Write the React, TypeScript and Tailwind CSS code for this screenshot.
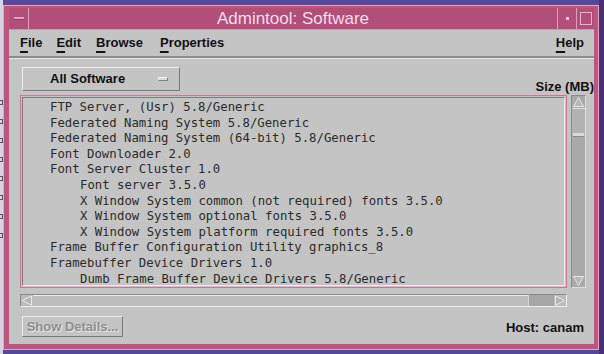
import React from 'react';

const rows: { text: string; level: 1 | 2 }[] = [
  { text: 'FTP Server, (Usr) 5.8/Generic', level: 1 },
  { text: 'Federated Naming System 5.8/Generic', level: 1 },
  { text: 'Federated Naming System (64-bit) 5.8/Generic', level: 1 },
  { text: 'Font Downloader 2.0', level: 1 },
  { text: 'Font Server Cluster 1.0', level: 1 },
  { text: 'Font server 3.5.0', level: 2 },
  { text: 'X Window System common (not required) fonts 3.5.0', level: 2 },
  { text: 'X Window System optional fonts 3.5.0', level: 2 },
  { text: 'X Window System platform required fonts 3.5.0', level: 2 },
  { text: 'Frame Buffer Configuration Utility graphics_8', level: 1 },
  { text: 'Framebuffer Device Drivers 1.0', level: 1 },
  { text: 'Dumb Frame Buffer Device Drivers 5.8/Generic', level: 2 },
];

const MenuItem: React.FC<{ label: string; className?: string }> = ({ label, className }) => (
  <span className={className}>
    <span className="underline decoration-[2px] underline-offset-[4px]">{label[0]}</span>
    {label.slice(1)}
  </span>
);

export default function App() {
  return (
    <div className="w-[604px] h-[354px] bg-[#54489a] flex overflow-hidden font-['Liberation_Sans',Arial,sans-serif]">
      {/* strip of the window behind */}
      <div className="w-[3px] h-full bg-[#d6d4e2] flex flex-col pt-[100px] gap-[14px]">
        {[0, 1, 2, 3, 4, 5, 6, 7].map((i) => (
          <div key={i} className="w-[3px] h-[5px] border-r border-y border-[#555]" />
        ))}
      </div>

      {/* window frame */}
      <div className="mt-[5px] w-[596px] h-[345px] bg-[#b9577f] border border-[#e3a6c2] pt-[2px] pl-[5px] pr-[4px] pb-[5px] flex flex-col">
        {/* title bar */}
        <div className="h-[22px] flex items-stretch bg-[#b24e7a] border-b border-[#d98fb0]">
          <div className="w-[20px] border-r border-[#e09cbc] flex items-center justify-center">
            <div className="w-[10px] h-[3px] bg-[#e8a0c0] border-b border-[#8e3a60]" />
          </div>
          <div className="flex-1 flex items-center justify-center text-[17px] text-[#f4dce8] leading-none">
            Admintool: Software
          </div>
          <div className="w-[19px] border-l border-[#e09cbc] flex items-center justify-center">
            <div className="w-[3px] h-[3px] bg-[#f0c0d6]" />
          </div>
          <div className="w-[18px] border-l border-[#e09cbc] flex items-center justify-center">
            <div className="w-[12px] h-[13px] border border-[#eab0ca]" />
          </div>
        </div>

        {/* client area */}
        <div className="flex-1 bg-[#c4c4c4] flex flex-col">
          {/* menu bar */}
          <div className="h-[28px] shrink-0 flex items-center pl-[11px] pr-[10px] text-[13px] font-bold text-[#111] border-b-2 border-b-[#8c8c8c] shadow-[0_1px_0_#e6e6e6]">
            <MenuItem label="File" />
            <MenuItem label="Edit" className="ml-[14px]" />
            <MenuItem label="Browse" className="ml-[15px]" />
            <MenuItem label="Properties" className="ml-[17px]" />
            <MenuItem label="Help" className="ml-auto" />
          </div>

          <div className="pl-[11px] flex flex-col">
            {/* selector row */}
            <div className="flex items-end pt-[9px] h-[37px]">
              <div className="ml-[2px] self-start w-[158px] h-[24px] flex items-center border border-t-[#eeeeee] border-l-[#eeeeee] border-r-[#7a7a7a] border-b-[#7a7a7a] text-[13px] font-bold text-[#111]">
                <span className="pl-[27px]">All Software</span>
                <span className="ml-auto mr-[11px] w-[10px] h-[4px] bg-[#d8d8d8] border border-t-[#f2f2f2] border-l-[#f2f2f2] border-r-[#808080] border-b-[#808080]" />
              </div>
              <div className="ml-auto pb-[2px] text-[13px] font-bold text-[#111] leading-none">Size (MB)</div>
            </div>

            {/* list with vertical scrollbar */}
            <div className="flex gap-[4px]">
              <div className="w-[547px] h-[193px] border border-[#c07a9a] p-[1px]">
                <div className="h-full border border-t-[#7c7c7c] border-l-[#7c7c7c] border-r-[#ececec] border-b-[#ececec] pt-[2px] overflow-hidden font-['DejaVu_Sans_Mono',monospace] text-[12.3px] leading-[15.6px] text-[#2b2b2b]">
                  {rows.map((r, i) => (
                    <div key={i} className={r.level === 1 ? 'pl-[27px]' : 'pl-[57px]'}>
                      {r.text}
                    </div>
                  ))}
                </div>
              </div>
              <div className="w-[15px] h-[193px] bg-[#a9a9a9] border border-t-[#8a8a8a] border-l-[#8a8a8a] border-r-[#dedede] border-b-[#dedede] flex flex-col">
                <svg width="13" height="12" viewBox="0 0 13 12" className="shrink-0">
                  <path d="M6.5 1.5 L11.5 10.5 L1.5 10.5 Z" fill="#b6b6b6" stroke="#e8e8e8" strokeWidth="1" />
                </svg>
                <div className="h-[29px] bg-[#b2b2b2] border-t border-[#e2e2e2] flex flex-col justify-end">
                  <div className="mx-[1px] h-[4px] bg-[#dadada] border-b border-[#8a8a8a]" />
                </div>
                <div className="flex-1" />
                <svg width="13" height="12" viewBox="0 0 13 12" className="shrink-0">
                  <path d="M1.5 1.5 L11.5 1.5 L6.5 10.5 Z" fill="#b6b6b6" stroke="#e8e8e8" strokeWidth="1" />
                </svg>
              </div>
            </div>

            {/* horizontal scrollbar */}
            <div className="mt-[6px] w-[547px] h-[13px] bg-[#bcbcbc] border border-t-[#8a8a8a] border-l-[#8a8a8a] border-r-[#efefef] border-b-[#efefef] flex">
              <svg width="12" height="11" viewBox="0 0 12 11" className="shrink-0">
                <path d="M1.5 5.5 L10.5 1 L10.5 10 Z" fill="#b4b4b4" stroke="#e8e8e8" strokeWidth="1" />
              </svg>
              <div className="flex-1 border-t border-[#ededed]" />
              <div className="w-[26px] bg-[#a6a6a6] border-l border-[#d4d4d4]" />
              <svg width="12" height="11" viewBox="0 0 12 11" className="shrink-0">
                <path d="M10.5 5.5 L1.5 1 L1.5 10 Z" fill="#b4b4b4" stroke="#e8e8e8" strokeWidth="1" />
              </svg>
            </div>

            {/* bottom row */}
            <div className="mt-[8px] flex items-center pr-[10px]">
              <div className="ml-[2px] w-[101px] h-[21px] flex items-center justify-center border border-t-[#ededed] border-l-[#ededed] border-r-[#7a7a7a] border-b-[#7a7a7a] text-[13px] font-bold text-[#8e8e8e] [text-shadow:1px_1px_0_#e8e8e8]">
                Show Details...
              </div>
              <div className="ml-auto mt-[3px] text-[13px] font-bold text-[#111]">Host: canam</div>
            </div>
          </div>
        </div>
      </div>

      {/* desktop edge on the right */}
      <div className="flex-1 h-full bg-[#4a2f72]" />
    </div>
  );
}
